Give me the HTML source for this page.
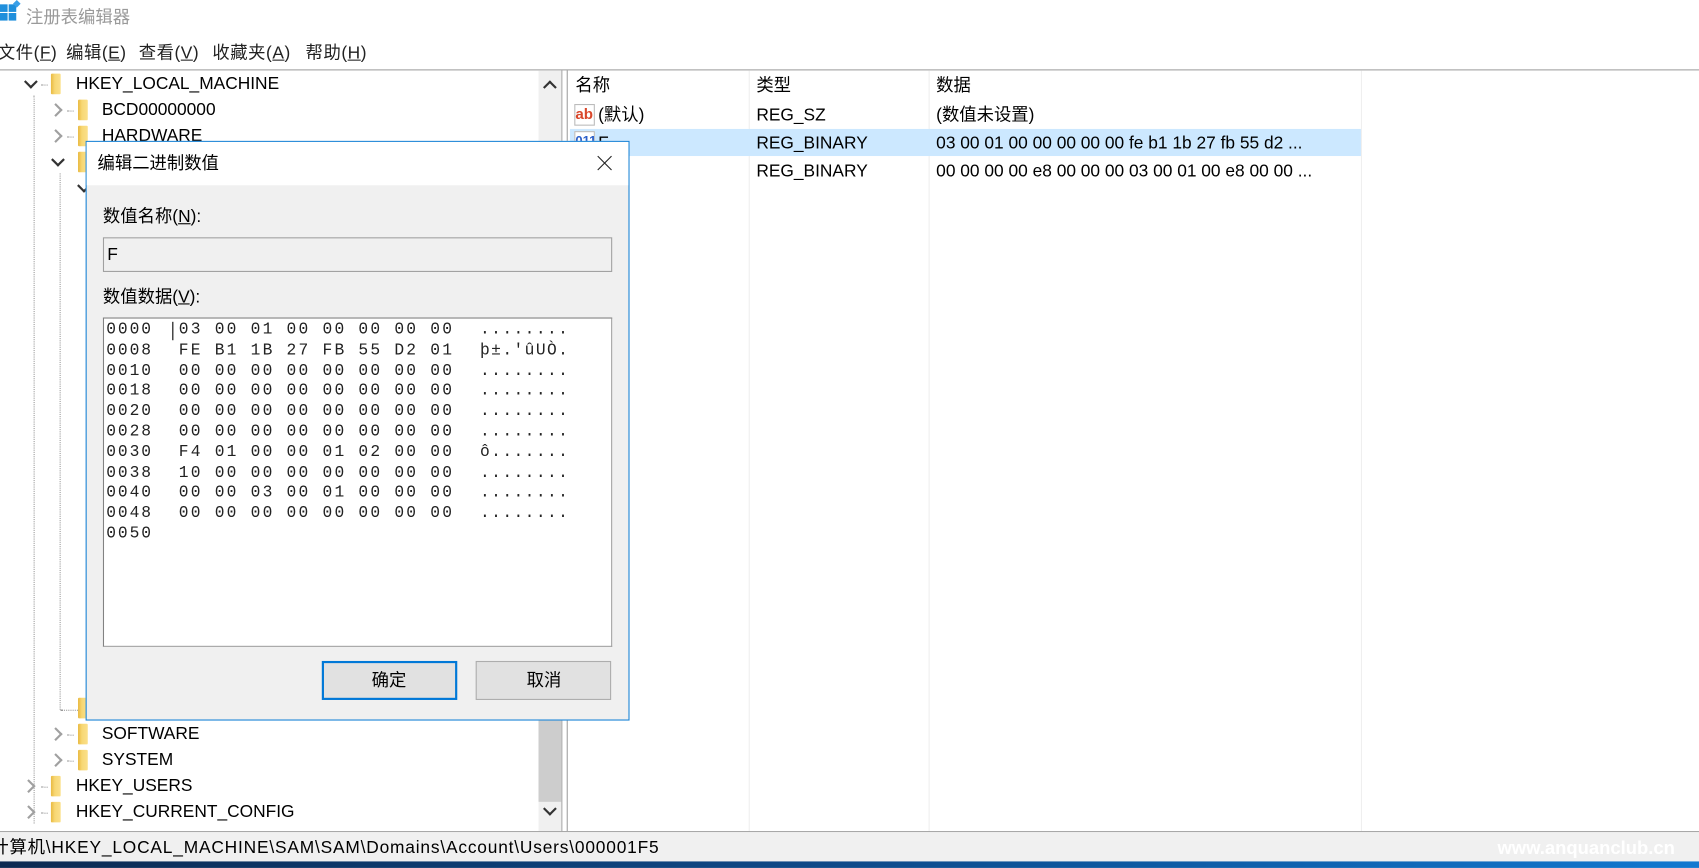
<!DOCTYPE html>
<html><head><meta charset="utf-8"><style>
html,body{margin:0;padding:0;width:1699px;height:868px;overflow:hidden;background:#fff}
#w{position:absolute;left:0;top:0;width:1568px;height:801px;transform:scale(1.08355);transform-origin:0 0;font-family:"Liberation Sans","Noto Sans CJK SC",sans-serif;font-size:16px;color:#000}
.a{position:absolute;white-space:pre;line-height:24px}
.fd{position:absolute;width:9px;height:19px;background:linear-gradient(90deg,#e9b940 0,#f7d774 40%,#fbe08a 100%);border-radius:1px}
.chd{position:absolute;width:7px;height:7px;border-right:2px solid #333;border-bottom:2px solid #333;transform:rotate(45deg)}
.chr{position:absolute;width:7px;height:7px;border-right:2px solid #a0a0a0;border-bottom:2px solid #a0a0a0;transform:rotate(-45deg)}
.dot{position:absolute;border-left:1px dotted #999}
.hd{position:absolute;border-top:1px dotted #999;width:6px}
.mono{font-family:"Liberation Mono","DejaVu Sans Mono",monospace;font-size:15px;line-height:18.8px;position:absolute;white-space:pre;color:#222}
</style></head><body><div id="w">
<!-- title -->
<div class="a" style="left:0;top:4px;width:7px;height:7px;background:#1f8fdc"></div>
<div class="a" style="left:8px;top:4px;width:7px;height:7px;background:#1f8fdc"></div>
<div class="a" style="left:0;top:12px;width:7px;height:7px;background:#1f8fdc"></div>
<div class="a" style="left:8px;top:12px;width:7px;height:7px;background:#1f8fdc"></div>
<div class="a" style="left:13px;top:1px;width:5px;height:5px;background:#3aa0e8;transform:rotate(45deg)"></div>
<div class="a" style="left:24px;top:5px;color:#9a9a9a;font-size:16px">注册表编辑器</div>
<!-- menu -->
<div class="a" style="left:-2px;top:38px;color:#222;letter-spacing:0.5px">文件(<u>F</u>)</div>
<div class="a" style="left:61px;top:38px;color:#222;letter-spacing:0.5px">编辑(<u>E</u>)</div>
<div class="a" style="left:128px;top:38px;color:#222;letter-spacing:0.5px">查看(<u>V</u>)</div>
<div class="a" style="left:196px;top:38px;color:#222;letter-spacing:0.5px">收藏夹(<u>A</u>)</div>
<div class="a" style="left:282px;top:38px;color:#222;letter-spacing:0.5px">帮助(<u>H</u>)</div>
<div class="a" style="left:0;top:64px;width:1568px;height:1px;background:#a0a0a0"></div>
<!-- tree panel -->
<div class="a" style="left:518px;top:65px;width:1px;height:702px;background:#a0a0a0"></div>
<div class="a" style="left:497px;top:65px;width:21px;height:702px;background:#f0f0f0"></div>
<div class="a" style="left:497px;top:640px;width:21px;height:100px;background:#cdcdcd"></div>
<div class="chd" style="left:503px;top:76px;transform:rotate(-135deg)"></div>
<div class="chd" style="left:503px;top:742px"></div>
<div class="dot" style="left:31px;top:88px;height:672px"></div>
<div class="dot" style="left:55px;top:160px;height:495px"></div>
<div class="hd" style="left:56px;top:655px;width:16px"></div>

<div class="chd" style="left:24px;top:71px"></div><div class="hd" style="left:38px;top:78px"></div><div class="fd" style="left:47px;top:68px"></div><div class="a" style="left:70px;top:66px">HKEY_LOCAL_MACHINE</div>
<div class="chr" style="left:47px;top:97px"></div><div class="hd" style="left:62px;top:102px"></div><div class="fd" style="left:72px;top:92px"></div><div class="a" style="left:94px;top:90px">BCD00000000</div>
<div class="chr" style="left:47px;top:121px"></div><div class="hd" style="left:62px;top:126px"></div><div class="fd" style="left:72px;top:116px"></div><div class="a" style="left:94px;top:114px">HARDWARE</div>
<div class="chd" style="left:49px;top:143px"></div><div class="fd" style="left:72px;top:140px"></div>
<div class="chd" style="left:73px;top:167px"></div>
<div class="fd" style="left:72px;top:644px"></div>
<div class="chr" style="left:47px;top:673px"></div><div class="hd" style="left:62px;top:678px"></div><div class="fd" style="left:72px;top:668px"></div><div class="a" style="left:94px;top:666px">SOFTWARE</div>
<div class="chr" style="left:47px;top:697px"></div><div class="hd" style="left:62px;top:702px"></div><div class="fd" style="left:72px;top:692px"></div><div class="a" style="left:94px;top:690px">SYSTEM</div>
<div class="chr" style="left:22px;top:721px"></div><div class="hd" style="left:38px;top:726px"></div><div class="fd" style="left:47px;top:716px"></div><div class="a" style="left:70px;top:714px">HKEY_USERS</div>
<div class="chr" style="left:22px;top:745px"></div><div class="hd" style="left:38px;top:750px"></div><div class="fd" style="left:47px;top:740px"></div><div class="a" style="left:70px;top:738px">HKEY_CURRENT_CONFIG</div>

<!-- right panel -->
<div class="a" style="left:523px;top:65px;width:1px;height:702px;background:#a0a0a0"></div>
<div class="a" style="left:691px;top:65px;width:1px;height:702px;background:#efefef"></div>
<div class="a" style="left:857px;top:65px;width:1px;height:702px;background:#efefef"></div>
<div class="a" style="left:1256px;top:65px;width:1px;height:702px;background:#efefef"></div>
<div class="a" style="left:526px;top:119px;width:730px;height:25px;background:#cce8ff"></div>
<div class="a" style="left:531px;top:68px">名称</div><div class="a" style="left:698px;top:68px">类型</div><div class="a" style="left:864px;top:68px">数据</div>
<div class="a" style="left:530px;top:96px;width:19px;height:20px;background:#fff;border:1px solid #bbb;box-sizing:border-box"></div>
<div class="a" style="left:531px;top:93px;color:#d9472b;font-weight:bold;font-size:14px">ab</div>
<div class="a" style="left:552px;top:95px">(默认)</div><div class="a" style="left:698px;top:95px">REG_SZ</div><div class="a" style="left:864px;top:95px">(数值未设置)</div>
<div class="a" style="left:530px;top:121px;width:19px;height:20px;background:#fff;border:1px solid #bbb;box-sizing:border-box"></div>
<div class="a" style="left:531px;top:118px;color:#2b5fc9;font-weight:bold;font-size:12px">011</div>
<div class="a" style="left:552px;top:121px">F</div><div class="a" style="left:698px;top:121px">REG_BINARY</div><div class="a" style="left:864px;top:121px">03 00 01 00 00 00 00 00 fe b1 1b 27 fb 55 d2 ...</div>
<div class="a" style="left:698px;top:147px">REG_BINARY</div><div class="a" style="left:864px;top:147px">00 00 00 00 e8 00 00 00 03 00 01 00 e8 00 00 ...</div>

<!-- status bar -->
<div class="a" style="left:0;top:767px;width:1568px;height:1px;background:#a0a0a0"></div>
<div class="a" style="left:0;top:768px;width:1568px;height:27px;background:#f0f0f0"></div>
<div class="a" style="left:-8px;top:771px;letter-spacing:0.75px">计算机\HKEY_LOCAL_MACHINE\SAM\SAM\Domains\Account\Users\000001F5</div>
<div class="a" style="left:1382px;top:771px;color:#fff;font-size:17px;font-weight:bold">www.anquanclub.cn</div>
<div class="a" style="left:0;top:795px;width:1568px;height:6px;background:linear-gradient(90deg,#0c2a52,#0d4a8a 50%,#1178d0)"></div>

<!-- dialog -->
<div class="a" style="left:79px;top:130px;width:500px;height:533px;border:1px solid #1883d7;background:#f0f0f0"></div>
<div class="a" style="left:80px;top:131px;width:500px;height:40px;background:#fff"></div>
<div class="a" style="left:90px;top:140px">编辑二进制数值</div>
<div class="a" style="left:549px;top:150px;width:18px;height:1px;background:#222;transform:rotate(45deg)"></div>
<div class="a" style="left:549px;top:150px;width:18px;height:1px;background:#222;transform:rotate(-45deg)"></div>
<div class="a" style="left:95px;top:189px">数值名称(<u>N</u>):</div>
<div class="a" style="left:95px;top:219px;width:470px;height:32px;border:1px solid #a0a0a0;box-sizing:border-box;background:#f0f0f0"></div>
<div class="a" style="left:99px;top:224px">F</div>
<div class="a" style="left:95px;top:263px">数值数据(<u>V</u>):</div>
<div class="a" style="left:95px;top:293px;width:470px;height:304px;border:1px solid #a0a0a0;border-top-color:#828282;border-left-color:#828282;box-sizing:border-box;background:#fff"></div>
<div class="a" style="left:159px;top:297px;width:1px;height:17px;background:#000"></div>
<div class="mono" style="left:98px;top:296px;letter-spacing:1.8px">0000
0008
0010
0018
0020
0028
0030
0038
0040
0048
0050</div>
<div class="mono" style="left:165px;top:296px;letter-spacing:2.05px">03 00 01 00 00 00 00 00
FE B1 1B 27 FB 55 D2 01
00 00 00 00 00 00 00 00
00 00 00 00 00 00 00 00
00 00 00 00 00 00 00 00
00 00 00 00 00 00 00 00
F4 01 00 00 01 02 00 00
10 00 00 00 00 00 00 00
00 00 03 00 01 00 00 00
00 00 00 00 00 00 00 00</div>
<div class="mono" style="left:443px;top:296px;letter-spacing:1.3px">........
þ±.'ûUÒ.
........
........
........
........
ô.......
........
........
........</div>
<div class="a" style="left:297px;top:610px;width:125px;height:36px;border:2px solid #0078d7;box-sizing:border-box;background:#e1e1e1"></div>
<div class="a" style="left:343px;top:617px">确定</div>
<div class="a" style="left:439px;top:610px;width:125px;height:36px;border:1px solid #adadad;box-sizing:border-box;background:#e1e1e1"></div>
<div class="a" style="left:486px;top:617px">取消</div>
</div></body></html>
